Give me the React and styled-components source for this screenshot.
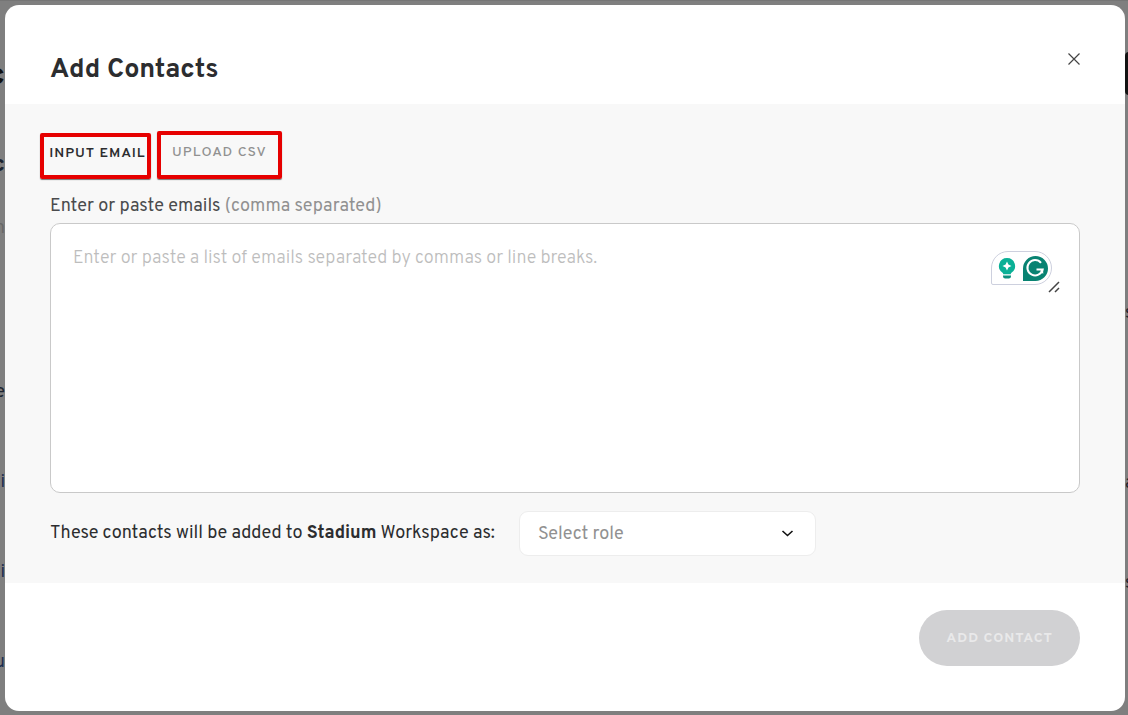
import React, { useState } from 'react';
import styled, { createGlobalStyle } from 'styled-components';

const GlobalStyle = createGlobalStyle`
  *, *::before, *::after {
    box-sizing: border-box;
  }

  body {
    margin: 0;
    background: #7f7f7f;
    color: #2c2d2f;
    font-family: Overpass, Roboto, "Liberation Sans", sans-serif;
    font-size: 18px;
    line-height: 24px;
  }

  button, select, textarea {
    font-family: inherit;
  }
`;

const Page = styled.div`
  display: grid;
  grid-template-columns: 5px minmax(0, 1fr) 3px;
  min-height: 100vh;
  padding: 4px 0;
  border-top: 1px solid #757575;
  overflow: hidden;
`;

/* the strips of the contacts page that stay visible beside the dialog */
const Edge = styled.div`
  display: flex;
  flex-direction: column;
  align-items: ${props => (props.$side === 'left' ? 'flex-end' : 'flex-start')};
  overflow: hidden;
`;

const EdgeText = styled.span`
  height: ${props => props.$height}px;
  flex: none;
  display: flex;
  align-items: center;
  color: ${props => props.$color || '#1c2430'};
  font-size: ${props => props.$size || 18}px;
  font-weight: ${props => props.$weight || 400};
`;

const EdgeButton = styled.span`
  flex: none;
  width: 8px;
  height: 43px;
  margin: 47px 0 199px;
  border-radius: 4px;
  background: #131313;
`;

const Dialog = styled.section`
  display: flex;
  flex-direction: column;
  border-radius: 14px;
  background: #fff;
  overflow: hidden;
`;

const Header = styled.header`
  display: flex;
  align-items: flex-start;
  justify-content: space-between;
  padding: 43px 40px 16px 45px;
`;

const Title = styled.h1`
  margin: 0;
  padding-top: 4px;
  font-size: 27px;
  font-weight: 700;
  line-height: 36px;
`;

const CloseButton = styled.button`
  display: flex;
  padding: 4px;
  border: none;
  background: none;
  color: #444;
  cursor: pointer;
`;

const Body = styled.form`
  padding: 27px 45px;
  background: #f8f8f8;
`;

const Tabs = styled.nav`
  display: flex;
  align-items: flex-end;
  gap: 6px;
  margin: 0 -10px 16px;
`;

const Tab = styled.button`
  height: ${props => (props.$active ? 46 : 48)}px;
  padding: ${props => (props.$active ? '0 0 4px 4px' : '0 8px 4px')};
  min-width: ${props => (props.$active ? 111 : 125)}px;
  border: 4px solid #e60000;
  border-radius: 2px;
  background: none;
  box-shadow: 0 1px 1px #777;
  color: ${props => (props.$active ? '#2c2d2f' : '#919191')};
  font-size: 14px;
  font-weight: ${props => (props.$active ? 600 : 500)};
  letter-spacing: 1px;
  line-height: 16px;
  white-space: nowrap;
  cursor: pointer;
`;

const Label = styled.label`
  display: block;
  margin-bottom: 4px;
  color: #4a4b4d;

  span {
    color: #919191;
  }
`;

const EmailField = styled.div`
  position: relative;
  display: flex;
`;

const EmailInput = styled.textarea`
  width: 100%;
  height: 270px;
  padding: 23px 22px;
  border: 1px solid #c9c9c9;
  border-radius: 10px;
  background: #fff;
  color: #2c2d2f;
  font-size: 18px;
  font-weight: 300;
  line-height: 24px;
  resize: none;

  &::placeholder {
    color: #bdbdbd;
    opacity: 1;
  }
`;

const WritingTools = styled.div`
  position: absolute;
  top: 28px;
  right: 28px;
  display: flex;
  align-items: center;
  gap: 7px;
  height: 34px;
  padding: 0 3px 0 6px;
  border: 1px solid #cdd0de;
  border-radius: 17px 17px 17px 2px;
  background: #fff;
`;

const ResizeGrip = styled.svg`
  position: absolute;
  top: 58px;
  right: 20px;
`;

const RoleRow = styled.div`
  display: flex;
  align-items: center;
  gap: 24px;
  margin-top: 18px;
`;

const SelectWrap = styled.div`
  position: relative;
  flex: 0 1 297px;

  svg {
    position: absolute;
    top: 16px;
    right: 22px;
    pointer-events: none;
  }
`;

const RoleSelect = styled.select`
  appearance: none;
  display: block;
  width: 100%;
  height: 45px;
  padding: 2px 48px 0 18px;
  border: 1px solid #ededed;
  border-radius: 9px;
  background: #fff;
  color: #919191;
  font-size: 18px;
`;

const Footer = styled.footer`
  display: flex;
  justify-content: flex-end;
  padding: 27px 45px 45px;
`;

const SubmitButton = styled.button`
  height: 56px;
  padding: 0 27px;
  border: none;
  border-radius: 28px;
  background: #d1d1d3;
  color: #e9e9ea;
  font-size: 14px;
  font-weight: 700;
  letter-spacing: 1px;
`;

const BulbIcon = () => (
  <svg width="18" height="22" viewBox="0 0 18 22" aria-hidden="true">
    <path d="M9 1a8 8 0 0 0-4.700 14.500c.6.5.9 1 1 1.700h7.400c.1-.7.4-1.200 1-1.700A8 8 0 0 0 9 1z" fill="#0ab096" />
    <path d="M9 4.500l1.400 3.100L13.500 9l-3.100 1.400L9 13.500l-1.400-3.100L4.500 9l3.100-1.400z" fill="#fff" />
    <path d="M5 18.500h8v.8a2.200 2.200 0 0 1-2.200 2.200H7.200A2.200 2.200 0 0 1 5 19.300z" fill="#0b8f7c" />
  </svg>
);

const GrammarIcon = () => (
  <svg width="25" height="25" viewBox="0 0 25 25" aria-hidden="true">
    <path d="M12.500 0A12.500 12.500 0 1 1 12.500 25H0V12.500A12.500 12.500 0 0 1 12.500 0z" fill="#088372" />
    <path d="M18 6.800A7.700 7.700 0 1 0 19.600 13.500H13.500" fill="none" stroke="#fff" strokeWidth="2" />
    <path d="M20.200 12.500v5.500l-3-3" fill="#fff" />
  </svg>
);

const App = () => {
  const [tab, setTab] = useState('input');
  const [emails, setEmails] = useState('');
  const [role, setRole] = useState('');

  return (
    <>
      <GlobalStyle />
      <Page>
        <Edge $side="left" aria-hidden="true">
          <EdgeText $height={144} $size={30} $weight={800} $color="#111">c</EdgeText>
          <EdgeText $height={34} $size={22} $weight={700}>c</EdgeText>
          <EdgeText $height={92} $color="#686868">m</EdgeText>
          <EdgeText $height={73} />
          <EdgeText $height={90}>e</EdgeText>
          <EdgeText $height={90} $color="#1c2c50">i</EdgeText>
          <EdgeText $height={90} $color="#1c2c50">i</EdgeText>
          <EdgeText $height={90} $color="#1c2c50">u</EdgeText>
        </Edge>

        <Dialog role="dialog" aria-labelledby="dialog-title">
          <Header>
            <Title id="dialog-title">Add Contacts</Title>
            <CloseButton type="button" aria-label="Close">
              <svg width="14" height="14" viewBox="0 0 14 14">
                <path d="M1.500 1.500l11 11M12.500 1.500l-11 11" stroke="currentColor" strokeWidth="1.200" />
              </svg>
            </CloseButton>
          </Header>

          <Body id="contacts-form">
            <Tabs>
              <Tab type="button" $active={tab === 'input'} onClick={() => setTab('input')}>INPUT EMAIL</Tab>
              <Tab type="button" $active={tab === 'csv'} onClick={() => setTab('csv')}>UPLOAD CSV</Tab>
            </Tabs>

            <Label htmlFor="emails">
              Enter or paste emails <span>(comma separated)</span>
            </Label>
            <EmailField>
              <EmailInput
                id="emails"
                value={emails}
                onChange={e => setEmails(e.target.value)}
                placeholder="Enter or paste a list of emails separated by commas or line breaks."
              />
              <WritingTools>
                <BulbIcon />
                <GrammarIcon />
              </WritingTools>
              <ResizeGrip width="12" height="12" viewBox="0 0 12 12" aria-hidden="true">
                <path d="M1 11L11 1M7 11l4-4" stroke="#444" strokeWidth="1.500" fill="none" />
              </ResizeGrip>
            </EmailField>

            <RoleRow>
              <label htmlFor="role">
                These contacts will be added to <strong>Stadium</strong> Workspace as:
              </label>
              <SelectWrap>
                <RoleSelect id="role" value={role} onChange={e => setRole(e.target.value)}>
                  <option value="">Select role</option>
                </RoleSelect>
                <svg width="13" height="13" viewBox="0 0 13 13" aria-hidden="true">
                  <path d="M1.500 4l5 4.500 5-4.500" fill="none" stroke="#111" strokeWidth="1.600" />
                </svg>
              </SelectWrap>
            </RoleRow>
          </Body>

          <Footer>
            <SubmitButton type="submit" form="contacts-form" disabled>ADD CONTACT</SubmitButton>
          </Footer>
        </Dialog>

        <Edge $side="right" aria-hidden="true">
          <EdgeButton />
          <EdgeText $height={40}>s</EdgeText>
          <EdgeText $height={130} />
          <EdgeText $height={40}>a</EdgeText>
          <EdgeText $height={60} />
          <EdgeText $height={40}>s</EdgeText>
        </Edge>
      </Page>
    </>
  );
};

export default App;
